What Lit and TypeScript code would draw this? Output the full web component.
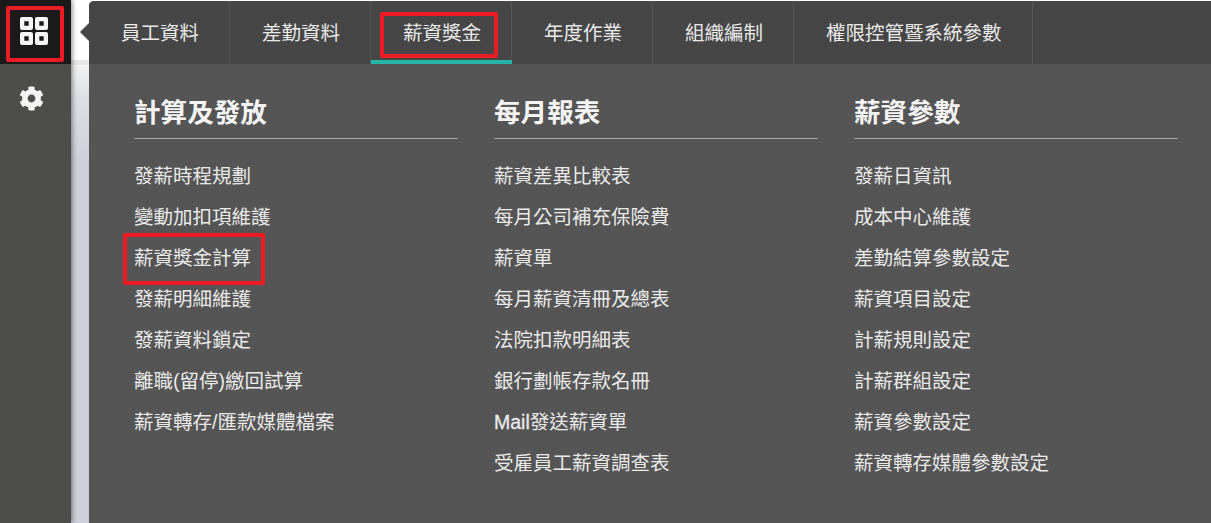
import { LitElement, html, css } from "lit";
import { customElement } from "lit/decorators.js";

const TABS = ["員工資料", "差勤資料", "薪資獎金", "年度作業", "組織編制", "權限控管暨系統參數"];
const COLS = [
  { title: "計算及發放", items: ["發薪時程規劃", "變動加扣項維護", "薪資獎金計算", "發薪明細維護", "發薪資料鎖定", "離職(留停)繳回試算", "薪資轉存/匯款媒體檔案"] },
  { title: "每月報表", items: ["薪資差異比較表", "每月公司補充保險費", "薪資單", "每月薪資清冊及總表", "法院扣款明細表", "銀行劃帳存款名冊", "Mail發送薪資單", "受雇員工薪資調查表"] },
  { title: "薪資參數", items: ["發薪日資訊", "成本中心維護", "差勤結算參數設定", "薪資項目設定", "計薪規則設定", "計薪群組設定", "薪資參數設定", "薪資轉存媒體參數設定"] },
];

const COG = "M487.4 315.7l-42.6-24.6c4.3-23.2 4.3-47 0-70.2l42.6-24.6c4.9-2.8 7.1-8.6 5.5-14-11.1-35.6-30-67.8-54.7-94.6-3.8-4.1-10-5.1-14.8-2.3L380.8 110c-17.9-15.4-38.5-27.3-60.8-35.1V25.8c0-5.6-3.9-10.5-9.4-11.7-36.7-8.2-74.3-7.8-109.2 0-5.5 1.2-9.4 6.1-9.4 11.7V75c-22.2 7.9-42.8 19.8-60.8 35.1L88.7 85.5c-4.9-2.8-11-1.9-14.8 2.3-24.7 26.7-43.6 58.9-54.7 94.6-1.7 5.4.6 11.2 5.5 14L67.3 221c-4.3 23.2-4.3 47 0 70.2l-42.6 24.6c-4.9 2.8-7.1 8.6-5.5 14 11.1 35.6 30 67.8 54.7 94.6 3.8 4.1 10 5.1 14.8 2.3l42.6-24.6c17.9 15.4 38.5 27.3 60.8 35.1v49.2c0 5.6 3.9 10.5 9.4 11.7 36.7 8.2 74.3 7.8 109.2 0 5.5-1.2 9.4-6.1 9.4-11.7v-49.2c22.2-7.9 42.8-19.8 60.8-35.1l42.6 24.6c4.9 2.8 11 1.9 14.8-2.3 24.7-26.7 43.6-58.9 54.7-94.6 1.5-5.5-.7-11.3-5.6-14.1zM256 336c-44.1 0-80-35.9-80-80s35.9-80 80-80 80 35.9 80 80-35.9 80-80 80z";

const SQUARE = "M2 0h9a2 2 0 0 1 2 2v9a2 2 0 0 1-2 2H2a2 2 0 0 1-2-2V2a2 2 0 0 1 2-2zM4.300 4.300v4.400h4.400V4.300z";

@customElement("app-root")
export class AppRoot extends LitElement {
  static styles = css`
    :host { display: block; width: 1211px; height: 523px; overflow: hidden; font-family: "Liberation Sans", "Noto Sans CJK TC", sans-serif; }
    .page { display: flex; height: 523px; background: #fff; }
    .side { width: 71px; flex: none; background: #4d4d4b; display: flex; flex-direction: column; align-items: stretch; box-shadow: 1px 0 5px rgba(0,0,0,.5); z-index: 1; }
    .logo { height: 64px; background: #1a1a1a; position: relative; box-sizing: border-box; padding: 17px 0 0 20px; }
    .redbox { position: absolute; border: 4px solid #ed1c24; border-radius: 2px; box-sizing: border-box; }
    .logo .redbox { left: 6px; top: 6px; width: 58px; height: 56px; }
    .logo svg { display: block; }
    .gear { display: flex; justify-content: center; padding-top: 22px; }
    .gear svg { margin-left: -8px; }
    .gutter { width: 18px; flex: none; position: relative; background: linear-gradient(#fff 0 60px, #e6e6e6 60px 65px, #f2f2f2 65px, #dcdee3 100px, #ced1da 160px, #ced1da); }
    .arrow { position: absolute; left: 9px; top: 23px; width: 0; height: 0; border: 9px solid transparent; border-left: 0; border-right-color: #464646; }
    .panel { flex: 1; margin-top: 1px; background: #555; border-top-left-radius: 5px; display: flex; flex-direction: column; overflow: hidden; }
    .tabs { display: flex; height: 63px; background: #464646; flex: none; }
    .tab { box-sizing: border-box; height: 63px; padding: 3px 30px 0 32px; display: flex; align-items: center; color: #eaeaea; font-size: 19.5px; line-height: 1; border-right: 1px solid #555; position: relative; white-space: nowrap; }
    .tab.active::after { content: ""; position: absolute; left: 0; right: -1px; bottom: 0; height: 4px; background: #26b5a6; }
    .tab.active .redbox { left: 9px; top: 11px; width: 118px; height: 46px; }
    .cols { display: grid; grid-template-columns: repeat(3, 324px); column-gap: 36px; padding: 0 0 0 45px; }
    .col h3 { margin: 0; height: 75px; box-sizing: border-box; padding-top: 31px; font-size: 26.6px; font-weight: 700; line-height: 36px; color: #f4f4f4; border-bottom: 1px solid #aaa; }
    ul { list-style: none; margin: 17px 0 0; padding: 0; }
    li { height: 41px; line-height: 41px; font-size: 19.5px; color: #eaeaea; white-space: nowrap; position: relative; }
    li .redbox { left: -11px; top: -5px; width: 142px; height: 52px; }
    .latin { -webkit-text-stroke: 0.3px #eaeaea; }
  `;

  private item(it: string) {
    if (it.startsWith("Mail")) return html`<span class="latin">Mail</span>${it.slice(4)}`;
    return html`${it}${it === "薪資獎金計算" ? html`<div class="redbox"></div>` : ""}`;
  }

  render() {
    return html`<div class="page">
      <div class="side">
        <div class="logo">
          <div class="redbox"></div>
          <svg width="28" height="28" viewBox="0 0 28 28" fill="#f6f6f6" fill-rule="evenodd">
            <path d="${SQUARE}"/>
            <path transform="translate(15 0)" d="${SQUARE}"/>
            <path transform="translate(0 15)" d="${SQUARE}"/>
            <path transform="translate(15 15)" d="${SQUARE}"/>
          </svg>
        </div>
        <div class="gear">
          <svg width="25" height="25" viewBox="0 0 512 512"><path fill="#f4f4f4" d="${COG}"/></svg>
        </div>
      </div>
      <div class="gutter"><div class="arrow"></div></div>
      <div class="panel">
        <div class="tabs">${TABS.map((t, i) => html`<div class="tab ${i === 2 ? "active" : ""}"><span>${t}</span>${i === 2 ? html`<div class="redbox"></div>` : ""}</div>`)}</div>
        <div class="cols">${COLS.map((c) => html`<div class="col"><h3>${c.title}</h3><ul>${c.items.map((it) => html`<li>${this.item(it)}</li>`)}</ul></div>`)}</div>
      </div>
    </div>`;
  }
}
